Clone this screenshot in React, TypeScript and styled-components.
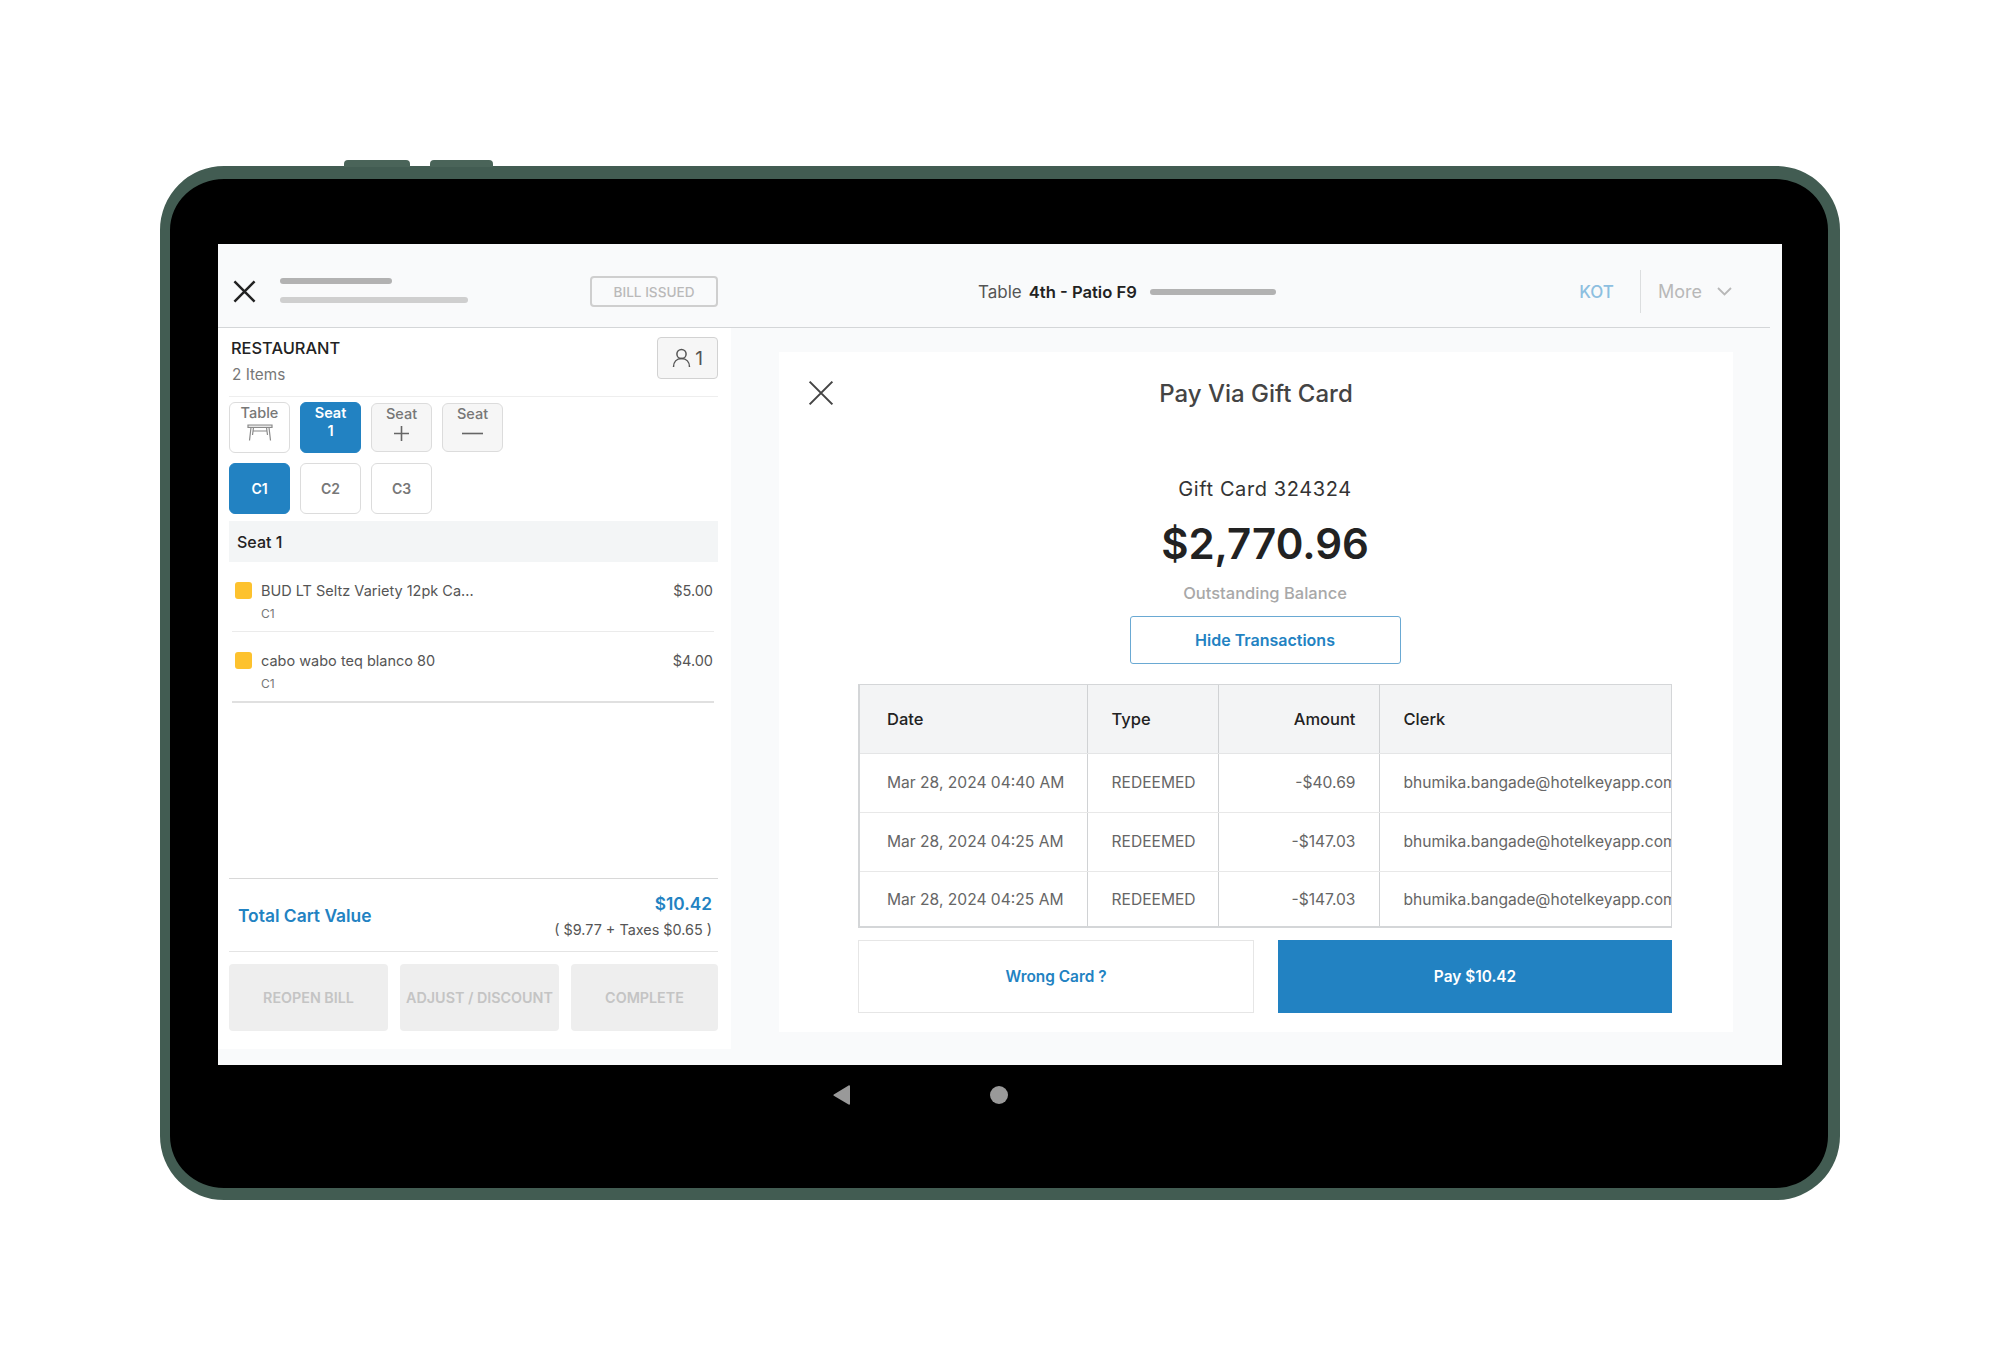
import React from 'react';
import styled, { createGlobalStyle } from 'styled-components';

const BLUE = '#2282c2';

const GlobalStyle = createGlobalStyle`
  html, body {
    margin: 0;
    padding: 0;
    background: #fff;
  }
  body {
    font-family: Inter, "Liberation Sans", sans-serif;
    color: #333;
  }
  * {
    box-sizing: border-box;
  }
`;

const Page = styled.div`
  width: 2000px;
  height: 1360px;
  padding: 166px 160px 0;
  overflow: hidden;
`;

const Device = styled.div`
  position: relative;
  width: 1680px;
  height: 1034px;
  background: #000;
  border: solid #425c52;
  border-width: 13px 12px 12px 10px;
  border-radius: 64px;
  padding: 65px 46px 0 48px;
  display: flex;
  flex-direction: column;
`;

const SideKey = styled.div<{ $left: number; $width: number }>`
  position: absolute;
  top: -19px;
  left: ${(p) => p.$left}px;
  width: ${(p) => p.$width}px;
  height: 7px;
  background: #4a6459;
  border-radius: 4px 4px 0 0;
`;

const Screen = styled.div`
  height: 821px;
  background: #f9fafb;
  display: flex;
  flex-direction: column;
`;

const NavBar = styled.div`
  flex: 1;
  display: flex;
  justify-content: flex-start;
  align-items: center;
  gap: 139px;
  padding: 0 0 63px 615px;
`;

const NavDot = styled.div`
  width: 18px;
  height: 18px;
  border-radius: 50%;
  background: #999;
`;

/* header */
const Header = styled.header`
  height: 84px;
  margin-right: 12px;
  padding-top: 12px;
  border-bottom: 1px solid #d4d6d8;
  display: flex;
  align-items: center;
`;

const HeaderLeft = styled.div`
  width: 500px;
  padding-left: 15px;
  display: flex;
  align-items: center;
`;

const CloseButton = styled.div<{ $size: number; $color: string }>`
  width: ${(p) => p.$size}px;
  height: ${(p) => p.$size}px;
  color: ${(p) => p.$color};
  flex: none;
  line-height: 0;
`;

const Skeleton = styled.div`
  margin: -3px 0 0 24px;
  display: flex;
  flex-direction: column;
  gap: 13px;
`;

const SkeletonBar = styled.div<{ $width: number; $color: string }>`
  width: ${(p) => p.$width}px;
  height: 6px;
  border-radius: 3px;
  background: ${(p) => p.$color};
`;

const BillBadge = styled.div`
  margin-left: auto;
  width: 128px;
  height: 31px;
  border: 2px solid #cfcfcf;
  border-radius: 4px;
  color: #b9b9b9;
  font-size: 13.6px;
  font-weight: 500;
  display: flex;
  align-items: center;
  justify-content: center;
`;

const HeaderCenter = styled.div`
  margin-left: 260px;
  display: flex;
  align-items: center;
  font-size: 17px;
  color: #555;
`;

const TableName = styled.span`
  margin-left: 7px;
  margin-right: 13px;
  font-size: 16.6px;
  font-weight: 600;
  color: #222;
`;

const HeaderRight = styled.div`
  margin-left: auto;
  padding-right: 38px;
  display: flex;
  align-items: center;
  font-size: 18px;
`;

const KotLink = styled.div`
  color: #8dbfe0;
  font-size: 17px;
  font-weight: 500;
  padding-right: 26px;
  border-right: 1px solid #dcdedf;
  height: 43px;
  display: flex;
  align-items: center;
`;

const MoreLink = styled.div`
  color: #b8b8b8;
  padding-left: 17px;
  display: flex;
  align-items: center;
  gap: 15px;
`;

/* body */
const Body = styled.div`
  flex: 1;
  display: flex;
  min-height: 0;
`;

const LeftPanel = styled.aside`
  width: 513px;
  height: 721px;
  flex: none;
  background: #fff;
  padding: 9px 13px 18px 11px;
  display: flex;
  flex-direction: column;
`;

const OrderHead = styled.div`
  height: 60px;
  flex: none;
  border-bottom: 1px solid #eeeeee;
  padding-left: 2px;
  display: flex;
  justify-content: space-between;
  align-items: flex-start;
`;

const OrderTitle = styled.div`
  font-size: 16.4px;
  line-height: 22px;
  font-weight: 500;
  color: #222;
`;

const OrderCount = styled.div`
  margin-top: 5px;
  margin-left: 1px;
  font-size: 15.3px;
  line-height: 22px;
  color: #777;
`;

const PaxButton = styled.div`
  width: 61px;
  height: 42px;
  background: #f6f6f6;
  border: 1px solid #d2d2d2;
  border-radius: 4px;
  font-size: 19px;
  color: #555;
  display: flex;
  align-items: center;
  justify-content: center;
  gap: 4px;
`;

const ChipRow = styled.div<{ $top: number }>`
  display: flex;
  gap: 10px;
  margin-top: ${(p) => p.$top}px;
  flex: none;
`;

const Chip = styled.div<{ $active?: boolean; $muted?: boolean }>`
  width: 61px;
  height: ${(p) => (p.$muted ? 49 : 51)}px;
  margin-top: ${(p) => (p.$muted ? 1 : 0)}px;
  border-radius: 6px;
  border: 1px solid ${(p) => (p.$active ? BLUE : '#dcdcdc')};
  background: ${(p) => (p.$active ? BLUE : p.$muted ? '#f6f6f6' : '#fff')};
  color: ${(p) => (p.$active ? '#fff' : '#777')};
  font-size: 14.5px;
  font-weight: ${(p) => (p.$active ? 600 : 500)};
  line-height: 18px;
  padding-top: 1px;
  display: flex;
  flex-direction: column;
  align-items: center;

  svg {
    margin-top: 2px;
  }
`;

const CartChip = styled(Chip)`
  justify-content: center;
  padding-top: 0;
  font-size: 14px;
  font-weight: 600;
`;

const SectionHead = styled.div`
  margin-top: 7px;
  height: 41px;
  flex: none;
  background: #f3f5f6;
  padding-left: 8px;
  font-size: 16px;
  font-weight: 500;
  color: #222;
  display: flex;
  align-items: center;
`;

const ItemRow = styled.div<{ $strong?: boolean }>`
  height: ${(p) => (p.$strong ? 71 : 70)}px;
  flex: none;
  margin: 0 4px 0 3px;
  padding: 20px 1px 0 3px;
  border-bottom: ${(p) => (p.$strong ? '2px solid #e0e0e0' : '1px solid #ebebeb')};
  display: flex;
  align-items: flex-start;
`;

const Swatch = styled.div`
  width: 17px;
  height: 17px;
  flex: none;
  margin-right: 9px;
  border-radius: 3px;
  background: #fdc22e;
`;

const ItemInfo = styled.div`
  flex: 1;
  min-width: 0;
`;

const ItemName = styled.div`
  font-size: 14.5px;
  line-height: 18px;
  color: #555;
`;

const ItemSeat = styled.div`
  margin-top: 6px;
  font-size: 12px;
  line-height: 16px;
  color: #777;
`;

const ItemPrice = styled.div`
  font-size: 14.5px;
  line-height: 18px;
  color: #555;
`;

const Spacer = styled.div`
  flex: 1;
`;

const TotalBlock = styled.div`
  height: 74px;
  flex: none;
  border-top: 1px solid #d8d8d8;
  border-bottom: 1px solid #e4e4e4;
  padding: 0 6px 0 9px;
  display: flex;
  justify-content: space-between;
  align-items: center;
`;

const TotalLabel = styled.div`
  font-size: 17.4px;
  font-weight: 600;
  color: ${BLUE};
`;

const TotalValues = styled.div`
  margin-top: 2px;
  text-align: right;
`;

const TotalAmount = styled.div`
  font-size: 17.3px;
  line-height: 24px;
  font-weight: 600;
  color: ${BLUE};
`;

const TotalTaxes = styled.div`
  margin-top: 4px;
  font-size: 14.4px;
  line-height: 20px;
  color: #555;
`;

const FooterButtons = styled.div`
  margin-top: 12px;
  height: 67px;
  flex: none;
  display: grid;
  grid-template-columns: 159px 159px 147px;
  gap: 12px;
`;

const DisabledButton = styled.div`
  border-radius: 4px;
  background: #eeeeee;
  color: #c4c4c4;
  font-size: 14.3px;
  font-weight: 600;
  white-space: nowrap;
  display: flex;
  align-items: center;
  justify-content: center;
`;

/* pay panel */
const ModalArea = styled.main`
  flex: 1;
  min-width: 0;
  padding: 24px 49px 33px 48px;
  display: flex;
`;

const Modal = styled.section`
  flex: 1;
  background: #fff;
  padding: 24px 61px 19px 79px;
  display: flex;
  flex-direction: column;
  align-items: center;
`;

const TitleRow = styled.div`
  align-self: stretch;
  height: 34px;
  margin: 0 -32px 0 -50px;
  display: grid;
  grid-template-columns: 1fr auto 1fr;
  align-items: center;
`;

const ModalTitle = styled.h2`
  margin: 0;
  font-size: 24px;
  font-weight: 500;
  color: #444;
`;

const CardName = styled.div`
  margin-top: 65px;
  font-size: 20px;
  line-height: 28px;
  letter-spacing: 0.6px;
  color: #333;
`;

const Balance = styled.div`
  margin-top: 13px;
  font-size: 42px;
  line-height: 56px;
  font-weight: 600;
  color: #222;
`;

const BalanceLabel = styled.div`
  margin-top: 11px;
  font-size: 16.5px;
  line-height: 20px;
  font-weight: 500;
  color: #a8a8a8;
`;

const OutlineButton = styled.div`
  margin-top: 13px;
  width: 271px;
  height: 48px;
  border: 1.5px solid #6aa9d3;
  border-radius: 3px;
  color: ${BLUE};
  font-size: 16px;
  font-weight: 600;
  display: flex;
  align-items: center;
  justify-content: center;
`;

const TableFrame = styled.div`
  margin-top: 20px;
  width: 814px;
  height: 244px;
  flex: none;
  overflow: hidden;
  border: 1px solid #d4d6d8;
  border-bottom-width: 2px;
  border-left-width: 2px;
`;

const TxTable = styled.table`
  width: 100%;
  table-layout: fixed;
  border-collapse: collapse;
  font-size: 15.6px;

  tbody tr:last-child td {
    height: 57px;
    border-bottom: 0;
  }
`;

const HeadCell = styled.th<{ $right?: boolean; $wide?: boolean }>`
  height: 68px;
  background: #f3f4f5;
  color: #222;
  font-size: 16.5px;
  font-weight: 500;
  text-align: ${(p) => (p.$right ? 'right' : 'left')};
  padding: ${(p) => (p.$right ? '0 23px 0 0' : p.$wide ? '0 0 0 27px' : '0 0 0 24px')};
  border-right: 1px solid #d0d2d4;
  border-bottom: 1px solid #e4e5e6;

  &:last-child {
    border-right: 0;
  }
`;

const BodyCell = styled.td<{ $right?: boolean; $wide?: boolean }>`
  height: 59px;
  color: #666;
  white-space: nowrap;
  overflow: hidden;
  text-align: ${(p) => (p.$right ? 'right' : 'left')};
  padding: ${(p) => (p.$right ? '0 23px 0 0' : p.$wide ? '0 0 0 27px' : '0 0 0 24px')};
  border-right: 1px solid #d0d2d4;
  border-bottom: 1px solid #e8e8e8;

  &:last-child {
    border-right: 0;
  }
`;

const Actions = styled.div`
  margin-top: 12px;
  width: 814px;
  height: 73px;
  flex: none;
  display: grid;
  grid-template-columns: 396px 394px;
  justify-content: space-between;
`;

const ActionButton = styled.div<{ $primary?: boolean }>`
  border: 1px solid ${(p) => (p.$primary ? BLUE : '#e6e6e6')};
  background: ${(p) => (p.$primary ? BLUE : '#fff')};
  color: ${(p) => (p.$primary ? '#fff' : BLUE)};
  font-size: 15.4px;
  font-weight: 600;
  display: flex;
  align-items: center;
  justify-content: center;
`;

const Cross: React.FC<{ width: number }> = ({ width }) => (
  <svg width="100%" height="100%" viewBox="0 0 24 24" fill="none" stroke="currentColor" strokeWidth={width}>
    <path d="M1.5 1.5 22.5 22.5M22.5 1.5 1.5 22.5" />
  </svg>
);

const TableIcon = () => (
  <svg width="26" height="17" viewBox="0 0 26 17" fill="none" stroke="#8a8a8a" strokeWidth="1.2">
    <path d="M1 1h24v2.5H1z" fill="#e6e6e6" />
    <path d="M4 3.5 2.5 16.5M6.5 3.5 5.5 11M22 3.5l1.5 13M19.5 3.5l1 7.5M5.5 7h15" />
  </svg>
);

const PersonIcon = () => (
  <svg width="19" height="20" viewBox="0 0 19 20" fill="none" stroke="#555" strokeWidth="1.5">
    <circle cx="9.5" cy="6" r="4.6" />
    <path d="M1.5 19c0-5 3-8.4 8-8.4s8 3.4 8 8.4" />
  </svg>
);

const PlusIcon = () => (
  <svg width="17" height="17" viewBox="0 0 17 17" fill="none" stroke="#666" strokeWidth="1.6">
    <path d="M8.5 1v15M1 8.5h15" />
  </svg>
);

const MinusIcon = () => (
  <svg width="21" height="17" viewBox="0 0 21 17" fill="none" stroke="#666" strokeWidth="1.6">
    <path d="M0 8.5h21" />
  </svg>
);

const Chevron = () => (
  <svg width="15" height="9" viewBox="0 0 15 9" fill="none" stroke="#b8b8b8" strokeWidth="1.8">
    <path d="M1 1l6.5 6.5L14 1" />
  </svg>
);

const BackTriangle = () => (
  <svg width="18" height="20" viewBox="0 0 18 20" fill="#999">
    <path d="M17 1.2v17.6c0 .8-.7 1.2-1.4.8L.8 10.7c-.5-.3-.5-1 0-1.3L15.6.4c.7-.4 1.4 0 1.4.8z" />
  </svg>
);

const transactions = [
  { date: 'Mar 28, 2024 04:40 AM', amount: '-$40.69' },
  { date: 'Mar 28, 2024 04:25 AM', amount: '-$147.03' },
  { date: 'Mar 28, 2024 04:25 AM', amount: '-$147.03' },
];

const items = [
  { name: 'BUD LT Seltz Variety 12pk Ca...', price: '$5.00' },
  { name: 'cabo wabo teq blanco 80', price: '$4.00' },
];

const App: React.FC = () => (
  <Page>
    <GlobalStyle />
    <Device>
      <SideKey $left={174} $width={66} />
      <SideKey $left={260} $width={63} />
      <Screen>
        <Header>
          <HeaderLeft>
            <CloseButton $size={23} $color="#222">
              <Cross width={2.6} />
            </CloseButton>
            <Skeleton>
              <SkeletonBar $width={112} $color="#b2b2b2" />
              <SkeletonBar $width={188} $color="#cfcfcf" />
            </Skeleton>
            <BillBadge>BILL ISSUED</BillBadge>
          </HeaderLeft>
          <HeaderCenter>
            Table
            <TableName>4th - Patio F9</TableName>
            <SkeletonBar $width={126} $color="#b2b2b2" />
          </HeaderCenter>
          <HeaderRight>
            <KotLink>KOT</KotLink>
            <MoreLink>
              More
              <Chevron />
            </MoreLink>
          </HeaderRight>
        </Header>
        <Body>
          <LeftPanel>
            <OrderHead>
              <div>
                <OrderTitle>RESTAURANT</OrderTitle>
                <OrderCount>2 Items</OrderCount>
              </div>
              <PaxButton>
                <PersonIcon />1
              </PaxButton>
            </OrderHead>
            <ChipRow $top={5}>
              <Chip>
                Table
                <TableIcon />
              </Chip>
              <Chip $active>
                <span>Seat</span>
                <span>1</span>
              </Chip>
              <Chip $muted>
                Seat
                <PlusIcon />
              </Chip>
              <Chip $muted>
                Seat
                <MinusIcon />
              </Chip>
            </ChipRow>
            <ChipRow $top={10}>
              <CartChip $active>C1</CartChip>
              <CartChip>C2</CartChip>
              <CartChip>C3</CartChip>
            </ChipRow>
            <SectionHead>Seat 1</SectionHead>
            {items.map((item, i) => (
              <ItemRow key={item.name} $strong={i === items.length - 1}>
                <Swatch />
                <ItemInfo>
                  <ItemName>{item.name}</ItemName>
                  <ItemSeat>C1</ItemSeat>
                </ItemInfo>
                <ItemPrice>{item.price}</ItemPrice>
              </ItemRow>
            ))}
            <Spacer />
            <TotalBlock>
              <TotalLabel>Total Cart Value</TotalLabel>
              <TotalValues>
                <TotalAmount>$10.42</TotalAmount>
                <TotalTaxes>( $9.77 + Taxes $0.65 )</TotalTaxes>
              </TotalValues>
            </TotalBlock>
            <FooterButtons>
              <DisabledButton>REOPEN BILL</DisabledButton>
              <DisabledButton>ADJUST / DISCOUNT</DisabledButton>
              <DisabledButton>COMPLETE</DisabledButton>
            </FooterButtons>
          </LeftPanel>
          <ModalArea>
            <Modal>
              <TitleRow>
                <CloseButton $size={26} $color="#444">
                  <Cross width={1.9} />
                </CloseButton>
                <ModalTitle>Pay Via Gift Card</ModalTitle>
              </TitleRow>
              <CardName>Gift Card 324324</CardName>
              <Balance>$2,770.96</Balance>
              <BalanceLabel>Outstanding Balance</BalanceLabel>
              <OutlineButton>Hide Transactions</OutlineButton>
              <TableFrame>
                <TxTable>
                  <colgroup>
                    <col style={{ width: 227 }} />
                    <col style={{ width: 131 }} />
                    <col style={{ width: 161 }} />
                    <col />
                  </colgroup>
                  <thead>
                    <tr>
                      <HeadCell $wide>Date</HeadCell>
                      <HeadCell>Type</HeadCell>
                      <HeadCell $right>Amount</HeadCell>
                      <HeadCell>Clerk</HeadCell>
                    </tr>
                  </thead>
                  <tbody>
                    {transactions.map((tx, i) => (
                      <tr key={i}>
                        <BodyCell $wide>{tx.date}</BodyCell>
                        <BodyCell>REDEEMED</BodyCell>
                        <BodyCell $right>{tx.amount}</BodyCell>
                        <BodyCell>bhumika.bangade@hotelkeyapp.com</BodyCell>
                      </tr>
                    ))}
                  </tbody>
                </TxTable>
              </TableFrame>
              <Actions>
                <ActionButton>Wrong Card ?</ActionButton>
                <ActionButton $primary>Pay $10.42</ActionButton>
              </Actions>
            </Modal>
          </ModalArea>
        </Body>
      </Screen>
      <NavBar>
        <BackTriangle />
        <NavDot />
      </NavBar>
    </Device>
  </Page>
);

export default App;
